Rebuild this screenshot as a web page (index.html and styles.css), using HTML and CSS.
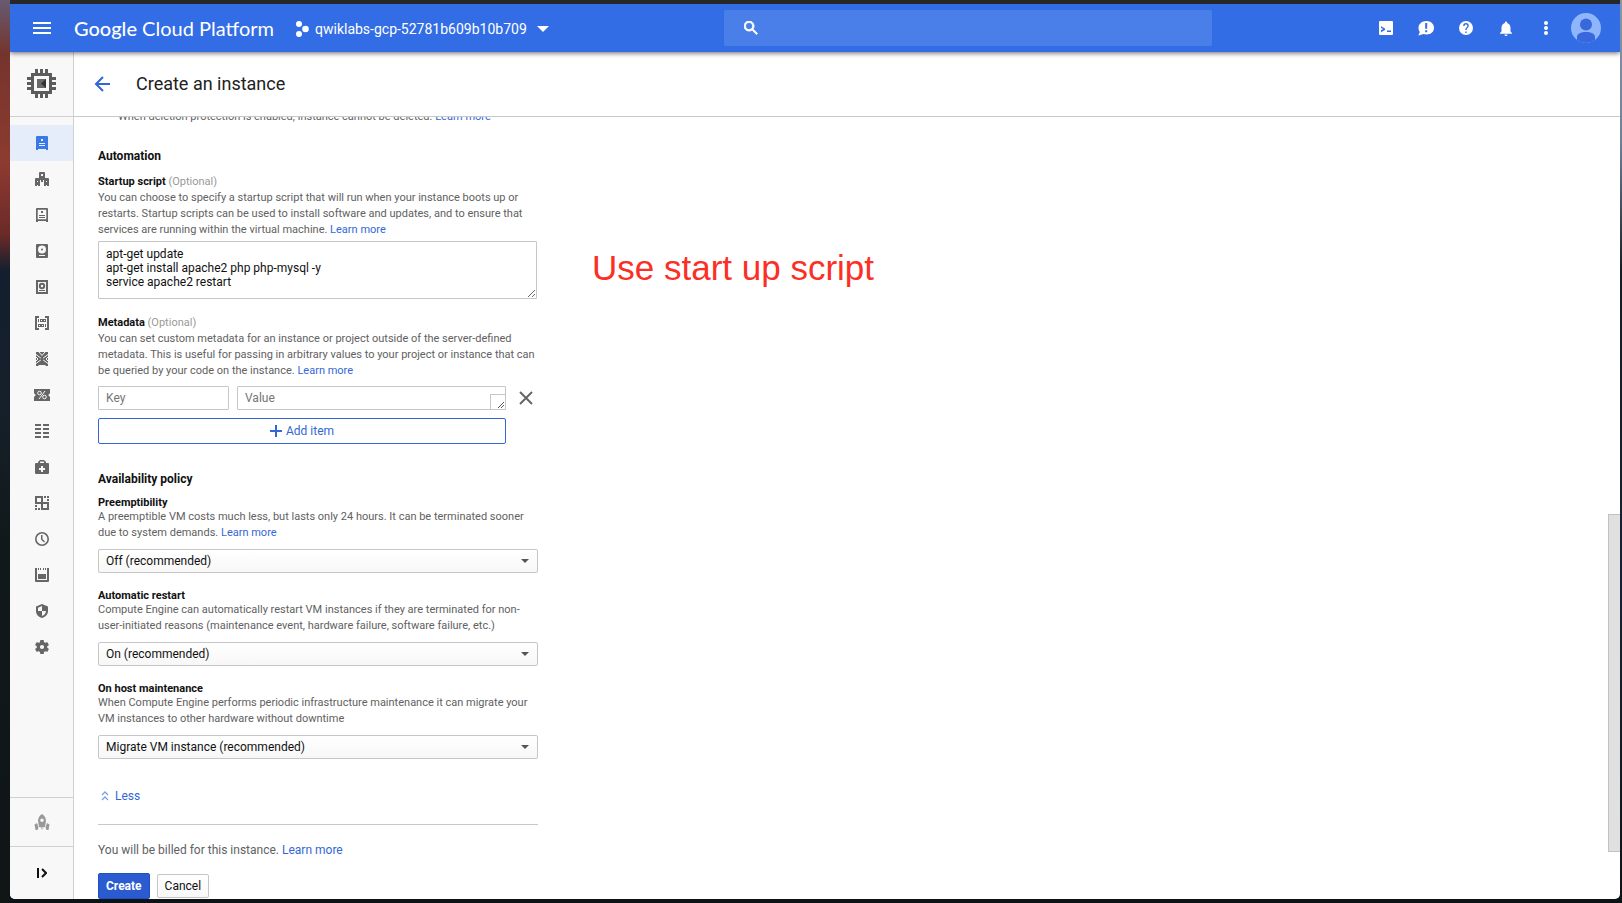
FILE: index.html
```html
<!DOCTYPE html>
<html lang="en">
<head>
<meta charset="utf-8">
<title>Create an instance - Google Cloud Platform</title>
<link rel="stylesheet" href="styles.css">
</head>
<body>
<div class="desktop">
<div class="window">
  <header class="topbar">
    <button class="icon-btn menu-btn" aria-label="Main menu"><svg width="18" height="12" viewBox="0 0 18 12"><path d="M0 0h18v2H0zM0 5h18v2H0zM0 10h18v2H0z"/></svg></button>
    <a class="brand" href="#"><b>Google</b> Cloud Platform</a>
    <button class="project">
      <svg width="14" height="16" viewBox="0 0 14 16"><circle cx="4" cy="3" r="3"/><circle cx="4" cy="13" r="3"/><circle cx="10.500" cy="8" r="3.300"/></svg>
      <span>qwiklabs-gcp-52781b609b10b709</span>
      <svg class="caret" width="12" height="6" viewBox="0 0 12 6"><path d="M0 0h12L6 6z"/></svg>
    </button>
    <label class="search" aria-label="Search">
      <svg width="14" height="14" viewBox="3 3 18 18"><path stroke="#fff" d="M15.500 14h-.79l-.28-.27A6.470 6.470 0 0 0 16 9.500 6.500 6.500 0 1 0 9.500 16c1.610 0 3.090-.59 4.230-1.570l.27.28v.79l5 4.990L20.490 19l-4.990-5zm-6 0C7.010 14 5 11.990 5 9.500S7.010 5 9.500 5 14 7.010 14 9.500 11.990 14 9.500 14z"/></svg>
      <input type="search">
    </label>
    <nav class="tools" aria-label="Tools">
      <button class="icon-btn" aria-label="Cloud Shell"><svg width="14" height="14" viewBox="0 0 14 14"><path fill-rule="evenodd" d="M1 0h12a1 1 0 0 1 1 1v12a1 1 0 0 1-1 1H1a1 1 0 0 1-1-1V1a1 1 0 0 1 1-1zM2 5.200v1.900L4.200 8 2 9.300v1.900L6 9V7.500zM8 9.500v1.500h4V9.500z"/></svg></button>
      <button class="icon-btn" aria-label="Send feedback"><svg width="16" height="16" viewBox="0 0 16 16"><path fill-rule="evenodd" d="M8.500 1C12.900 1 16 3.800 16 7.800s-3.100 6.700-7.300 6.700c-1.200 0-2.200-.2-3.200-.5L.3 15.500 1.800 12C.9 10.800.5 9.400.5 7.800.5 3.800 4 1 8.500 1zM7.200 3v5.800h2V3zm0 7.300v2h2v-2z"/></svg></button>
      <button class="icon-btn" aria-label="Help"><svg width="14" height="14" viewBox="2 2 20 20"><path d="M12 2a10 10 0 1 0 0 20 10 10 0 0 0 0-20zm1 17h-2v-2h2v2zm2.070-7.750-.9.920C13.450 12.900 13 13.500 13 15h-2v-.5c0-1.100.45-2.100 1.170-2.830l1.240-1.260c.37-.36.59-.86.59-1.410a2 2 0 1 0-4 0H8a4 4 0 1 1 8 0c0 .88-.36 1.680-.93 2.250z"/></svg></button>
      <button class="icon-btn" aria-label="Notifications"><svg width="12" height="15" viewBox="4 2 16 20"><path d="M12 22a2 2 0 0 0 2-2h-4a2 2 0 0 0 2 2zm6-6v-5c0-3.070-1.640-5.640-4.500-6.320V4a1.500 1.500 0 0 0-3 0v.68C7.630 5.360 6 7.920 6 11v5l-2 2v1h16v-1l-2-2z"/></svg></button>
      <button class="icon-btn" aria-label="More"><svg width="4" height="14" viewBox="0 0 4 14"><circle cx="2" cy="2" r="2"/><circle cx="2" cy="7" r="2"/><circle cx="2" cy="12" r="2"/></svg></button>
      <button class="icon-btn" aria-label="Account"><svg width="30" height="30" viewBox="0 0 30 30"><circle cx="15" cy="15" r="15" fill="#8fb6fb"/><circle cx="15" cy="11.500" r="6" fill="#3868dc"/><path fill="#3868dc" d="M6 27v-3c0-3.500 4-5 9-5s9 1.500 9 5v3a15 15 0 0 1-18 0z"/></svg></button>
    </nav>
  </header>
  <div class="body">
    <aside class="sidebar">
      <a class="product" href="#" aria-label="Compute Engine"><svg width="29" height="29" viewBox="0 0 29 29" fill="#5c5c5c"><path d="M8 0h3v4H8zM13 0h3v4h-3zM18 0h3v4h-3zM8 25h3v4H8zM13 25h3v4h-3zM18 25h3v4h-3zM0 8h4v3H0zM0 13h4v3H0zM0 18h4v3H0zM25 8h4v3h-4zM25 13h4v3h-4zM25 18h4v3h-4z"/><path fill-rule="evenodd" d="M4 4h21v21H4zM7 7v15h15V7z"/><path fill="#696969" d="M10 10h9v9h-9z"/><path fill="#333" d="M19 10v9l-5-4.500z"/></svg></a>
      <nav class="nav" aria-label="Compute Engine sections">
        <a class="active" href="#" aria-label="VM instances"><svg viewBox="0 0 16 16"><path fill-rule="evenodd" d="M3 1h10a1 1 0 0 1 1 1v13h-2v-1H4v1H2V2a1 1 0 0 1 1-1zM7 4v2h2V4zM5 8v1h6V8zM5 10v1h6v-1z"/></svg></a>
        <a href="#" aria-label="Instance groups"><svg viewBox="0 0 16 16"><path fill-rule="evenodd" d="M6 1h4a1 1 0 0 1 1 1v5h1V7h2a1 1 0 0 1 1 1v7h-2v-1h-1v1h-2V9H9v2H7V9H6v6H4v-1H3v1H1V8a1 1 0 0 1 1-1h3V2a1 1 0 0 1 1-1zM7 3v2h2V3zM3 10v1h1v-1zM12 10v1h1v-1z"/></svg></a>
        <a href="#" aria-label="Instance templates"><svg viewBox="0 0 16 16"><path fill-rule="evenodd" d="M3 1h10a1 1 0 0 1 1 1v13h-2v-1H4v1H2V2a1 1 0 0 1 1-1zm.7 1.700v9.600h8.600V2.700zM7 4h2v2H7zM5 8h6v1H5zM5 10h6v1H5z"/></svg></a>
        <a href="#" aria-label="Disks"><svg viewBox="0 0 16 16"><path fill-rule="evenodd" d="M3 1h10a1 1 0 0 1 1 1v12a1 1 0 0 1-1 1H3a1 1 0 0 1-1-1V2a1 1 0 0 1 1-1zm5 1.500a4 4 0 1 0 0 8 4 4 0 0 0 0-8zm0 3a1 1 0 1 1 0 2 1 1 0 0 1 0-2zM5 12v1h6v-1z"/></svg></a>
        <a href="#" aria-label="Snapshots"><svg viewBox="0 0 16 16"><path fill-rule="evenodd" d="M2 1h12v14H2zM4 3v10h8V3zm4 .8a3.200 3.200 0 1 1 0 6.400 3.200 3.200 0 0 1 0-6.400zm0 2a1.200 1.200 0 1 0 0 2.400 1.200 1.200 0 0 0 0-2.400zM5 11h6v1H5z"/></svg></a>
        <a href="#" aria-label="Images"><svg viewBox="0 0 16 16"><path fill-rule="evenodd" d="M1 1h4v2H3v10h2v2H1zM11 1h4v14h-4v-2h2V3h-2zM4 4h1v3H4zM6 4h3v3H6zm1 1v1h1V5zM9 4h3v3H9zm1 1v1h1V5zM4 9h3v3H4zm1 1v1h1v-1zM7 9h3v3H7zm1 1v1h1v-1zM11 9h1v3h-1z"/></svg></a>
        <a href="#" aria-label="TPUs"><svg viewBox="0 0 16 16"><path d="M2 1h12v14h-2l-1-1H5l-1 1H2z"/><path stroke="#f8f8f8" fill="none" d="M2 3.500l12 9M14 3.500l-12 9M5 1l3 3.500L11 1M2 6l2 2-2 2M14 6l-2 2 2 2"/><path d="M8 6.500l2 1.500-2 2-2-2z"/></svg></a>
        <a href="#" aria-label="Committed use discounts"><svg viewBox="0 0 16 16"><path d="M0 2h16v4.500a1.500 1.500 0 0 0 0 3V14H0V9.500a1.500 1.500 0 0 0 0-3z"/><g fill="none" stroke="#f8f8f8"><circle cx="5.500" cy="6" r="1.800"/><circle cx="10.500" cy="10" r="1.800"/><path d="M11 4l-6 8"/></g></svg></a>
        <a href="#" aria-label="Metadata"><svg viewBox="0 0 16 16"><path d="M1 1h6v2H1zM9 1h6v2H9zM1 5h6v2H1zM9 5h6v2H9zM1 9h6v2H1zM9 9h6v2H9zM1 13h6v2H1zM9 13h6v2H9z"/></svg></a>
        <a href="#" aria-label="Health checks"><svg viewBox="0 0 16 16"><path fill-rule="evenodd" d="M6 1h4l2 2v1h2a1 1 0 0 1 1 1v9a1 1 0 0 1-1 1H2a1 1 0 0 1-1-1V5a1 1 0 0 1 1-1h2V3zm0 3h4V3L9.500 2.500h-3L6 3zm1 3v2H5v2h2v2h2v-2h2V9H9V7z"/></svg></a>
        <a href="#" aria-label="Zones"><svg viewBox="0 0 16 16"><path fill-rule="evenodd" d="M1 1h8v6h6v8H7V9H1zM3 3v4h4V3zM9 9v4h4V9zM10 1h2v2h-2zM13 1h2v2h-2zM13 4h2v2h-2zM1 10h2v2H1zM1 13h2v2H1zM4 13h2v2H4z"/></svg></a>
        <a href="#" aria-label="Operations"><svg viewBox="0 0 16 16"><circle cx="8" cy="8" r="6.200" fill="none" stroke="currentColor" stroke-width="1.600"/><path d="M7 4h1.500v4l2.500 2.500-1 1L7 8.500z"/></svg></a>
        <a href="#" aria-label="Quotas"><svg viewBox="0 0 16 16"><path d="M1 1h2v12h10V1h2v13a1 1 0 0 1-1 1H2a1 1 0 0 1-1-1zM4 1h1v2H4zM6 1h1v2H6zM9 1h1v2H9zM11 1h1v2h-1zM4 7h8v5H4z"/></svg></a>
        <a href="#" aria-label="Security scans"><svg viewBox="0 0 16 16"><path fill-rule="evenodd" d="M8 1l6 2.500V8c0 3.500-2.500 6-6 7-3.500-1-6-3.500-6-7V3.500zM8 3 4 4.700V8h4zm0 5v5c2.200-.8 3.800-2.500 4-5z"/></svg></a>
        <a href="#" aria-label="Settings"><svg viewBox="2 2 20 20"><path d="M19.430 12.980c.04-.32.07-.64.07-.98s-.03-.66-.07-.98l2.110-1.650a.5.5 0 0 0 .12-.64l-2-3.460a.5.5 0 0 0-.61-.22l-2.490 1a7.300 7.300 0 0 0-1.690-.98l-.38-2.650A.49.49 0 0 0 14 2h-4a.49.49 0 0 0-.49.42l-.38 2.650c-.61.25-1.170.59-1.690.98l-2.490-1a.49.49 0 0 0-.61.22l-2 3.460a.49.49 0 0 0 .12.64l2.110 1.650a7.900 7.900 0 0 0 0 1.960l-2.110 1.650a.5.5 0 0 0-.12.64l2 3.460c.12.22.39.3.61.22l2.490-1c.52.4 1.080.73 1.690.98l.38 2.650c.03.24.24.42.49.42h4c.25 0 .46-.18.49-.42l.38-2.650a7.700 7.700 0 0 0 1.690-.98l2.490 1c.23.09.49 0 .61-.22l2-3.460a.5.5 0 0 0-.12-.64zM12 15a3 3 0 1 1 0-6 3 3 0 0 1 0 6z"/></svg></a>
      </nav>
      <a class="launcher" href="#" aria-label="Marketplace"><svg width="16" height="17" viewBox="0 0 16 17"><path fill="#999" fill-rule="evenodd" d="M8 0c3 2 4 4.500 4 7l-1 6H5L4 7c0-2.500 1-5 4-7zm0 4.500a1.800 1.800 0 1 0 0 3.600 1.800 1.800 0 0 0 0-3.600zM3 9l1.500 4.500L3.500 16H1.500L.5 10.500zM13 9l2.500 1.500-1 5.500h-2l-1-2.500z"/><path fill="#c8c8c8" d="M6 13h4l-2 3z"/></svg></a>
      <button class="expander" aria-label="Expand menu"><svg width="10" height="10" viewBox="0 0 10 10"><path fill="none" stroke="#111" stroke-width="2" d="M1 0v10M5 1l4 4-4 4"/></svg></button>
    </aside>
    <main class="main">
      <div class="page-head">
        <a class="back" href="#" aria-label="Back"><svg width="16" height="16" viewBox="0 0 16 16"><path fill="none" stroke="#3367d6" stroke-width="2" d="M16 8H2M9 1 2 8l7 7"/></svg></a>
        <h1>Create an instance</h1>
      </div>
      <div class="scroller">
        <form class="form">
          <p class="hint clipped">When deletion protection is enabled, instance cannot be deleted. <a href="#">Learn more</a></p>
          <section class="automation">
            <h2>Automation</h2>
            <label class="tall" for="script">Startup script <span>(Optional)</span></label>
            <p class="hint">You can choose to specify a startup script that will run when your instance boots up or<br>restarts. Startup scripts can be used to install software and updates, and to ensure that<br>services are running within the virtual machine. <a href="#">Learn more</a></p>
            <textarea id="script" class="script" spellcheck="false">apt-get update
apt-get install apache2 php php-mysql -y
service apache2 restart</textarea>
          </section>
          <section class="metadata">
            <label class="tall" for="key">Metadata <span>(Optional)</span></label>
            <p class="hint">You can set custom metadata for an instance or project outside of the server-defined<br>metadata. This is useful for passing in arbitrary values to your project or instance that can<br>be queried by your code on the instance. <a href="#">Learn more</a></p>
            <div class="pair">
              <input id="key" type="text" placeholder="Key">
              <textarea class="value" aria-label="Value" placeholder="Value"></textarea>
              <button type="button" class="remove" aria-label="Remove item"><svg width="14" height="14" viewBox="0 0 14 14"><path stroke="#666" stroke-width="2" d="M1 1l12 12M13 1 1 13"/></svg></button>
              <button type="button" class="add"><svg width="12" height="12" viewBox="0 0 12 12"><path d="M5 0h2v5h5v2H7v5H5V7H0V5h5z"/></svg>Add item</button>
            </div>
          </section>
          <section class="policy">
            <h2>Availability policy</h2>
            <div class="field">
              <label for="preempt">Preemptibility</label>
              <p class="hint">A preemptible VM costs much less, but lasts only 24 hours. It can be terminated sooner<br>due to system demands. <a href="#">Learn more</a></p>
              <select id="preempt"><option>Off (recommended)</option></select>
            </div>
            <div class="field">
              <label for="restart">Automatic restart</label>
              <p class="hint">Compute Engine can automatically restart VM instances if they are terminated for non-<br>user-initiated reasons (maintenance event, hardware failure, software failure, etc.)</p>
              <select id="restart"><option>On (recommended)</option></select>
            </div>
            <div class="field">
              <label for="maint">On host maintenance</label>
              <p class="hint">When Compute Engine performs periodic infrastructure maintenance it can migrate your<br>VM instances to other hardware without downtime</p>
              <select id="maint"><option>Migrate VM instance (recommended)</option></select>
            </div>
          </section>
          <a class="less" href="#"><svg width="8" height="10" viewBox="0 0 8 10"><path fill="none" stroke="#7d9fe6" stroke-width="1.300" d="M1 4l3-3 3 3M1 9l3-3 3 3"/></svg>Less</a>
          <p class="billing">You will be billed for this instance. <a href="#">Learn more</a></p>
          <div class="actions">
            <button type="submit" class="create">Create</button>
            <button type="button" class="cancel">Cancel</button>
          </div>
        </form>
        <p class="note">Use start up script</p>
        <div class="track"><div class="thumb"></div></div>
      </div>
    </main>
  </div>
</div>
</div>
</body>
</html>
```

FILE: styles.css
```css
* { box-sizing: border-box; }

body {
  margin: 0;
  font-family: Roboto, "Liberation Sans", sans-serif;
  font-size: 12px;
  color: #212121;
}

button, input, textarea, select { font: inherit; color: inherit; }
button { border: 0; padding: 0; background: none; cursor: pointer; }
a { color: #3367d6; text-decoration: none; }
h1, h2, p { margin: 0; font-weight: 400; }
svg { display: block; flex: none; }

.desktop {
  height: 100vh;
  padding: 0 2px 4px 10px;
  background:
    linear-gradient(#8796a8, #6d7f98 16%, #141e26 30%, #142334 65%, #0c1416) right / 2px 100% no-repeat,
    linear-gradient(#665b72, #74342c 6%, #8d3b30 18%, #6a2a28 26%, #131f2e 30%, #16202a 45%, #10191a 60%, #101516 100%) left / 10px 100% no-repeat,
    #0b1316;
}

.window {
  height: 100%;
  display: flex;
  flex-direction: column;
  overflow: hidden;
  border-top: 4px solid #272727;
  border-radius: 0 0 5px 5px;
  background: #fff;
}

/* Top bar */
.topbar {
  flex: none;
  z-index: 1;
  height: 48px;
  display: flex;
  align-items: center;
  padding-right: 14px;
  background: #326de6;
  box-shadow: 0 1px 5px rgba(0, 0, 0, .6);
  color: #fff;
  fill: #fff;
}

.icon-btn { width: 40px; height: 40px; display: flex; align-items: center; justify-content: center; }
.menu-btn { width: 64px; }
.brand { color: #fff; font-family: Lato, Roboto, sans-serif; font-size: 20px; width: 221px; white-space: nowrap; }
.brand b { font-weight: 500; }
.project { display: flex; align-items: center; gap: 6px; padding-top: 2px; font-size: 14px; flex: none; }
.project .caret { margin-left: 4px; }

.search {
  margin-left: auto;
  width: 488px;
  height: 36px;
  display: flex;
  align-items: center;
  padding-left: 20px;
  border-radius: 2px;
  background: #4a7fe9;
}
.search input { flex: 1; min-width: 0; border: 0; outline: 0; background: none; }
.tools { display: flex; margin-left: 154px; }

/* Sidebar */
.body { flex: 1; min-height: 0; display: flex; }

.sidebar {
  width: 64px;
  flex: none;
  display: flex;
  flex-direction: column;
  border-right: 1px solid #d0d0d0;
  background: #f8f8f8;
}
.product { height: 65px; flex: none; display: flex; align-items: center; justify-content: center; padding-bottom: 2px; border-bottom: 1px solid #d0d0d0; }
.nav { flex: 1; padding-top: 8px; }
.nav a { height: 36px; display: flex; align-items: center; justify-content: center; padding-left: 1px; color: #666; fill: currentColor; }
.nav svg { width: 16px; height: 16px; }
.nav a:last-child svg { width: 14px; height: 14px; }
.nav .active { background: #e6edfa; color: #3b78e7; }
.launcher, .expander { height: 49px; flex: none; display: flex; align-items: center; justify-content: center; padding-left: 1px; border-top: 1px solid #d0d0d0; }
.expander { height: 53px; }

/* Page */
.main { flex: 1; min-width: 0; display: flex; flex-direction: column; }
.page-head { height: 65px; flex: none; display: flex; align-items: center; gap: 26px; padding-left: 20px; border-bottom: 1px solid #c8c8c8; }
h1 { font-size: 18px; padding-bottom: 1px; }

.scroller { position: relative; flex: 1; min-height: 0; display: flex; overflow: hidden; }
.form { width: 440px; margin: -8px auto 0 24px; white-space: nowrap; }

h2 { font-size: 12px; line-height: 16px; font-weight: 700; color: #111; }
label { display: block; font-size: 11px; line-height: 14px; font-weight: 700; color: #111; }
label.tall { line-height: 16px; }
label span { font-weight: 400; color: #999; }
.hint { font-size: 11px; line-height: 16px; color: #616161; }
.clipped { padding-left: 20px; }

.automation { margin-top: 23px; }
.automation h2 { margin-bottom: 10px; }
.metadata { margin-top: 16px; }

.form textarea, .form input {
  display: block;
  width: 100%;
  border: 1px solid #c6c6c6;
  border-radius: 1px;
  background: #fff;
  outline: 0;
}
.form .script { width: 439px; height: 58px; margin-top: 3px; padding: 5px 7px; line-height: 14px; resize: both; color: #111; }

.pair { display: grid; grid-template-columns: 131px 269px 24px; gap: 8px; margin-top: 7px; }
.pair input, .pair textarea { height: 24px; padding: 0 7px; line-height: 22px; }
.pair ::placeholder { color: #757575; }
.value::-webkit-resizer {
  border: solid #c6c6c6;
  border-width: 1px 0 0 1px;
  background: url("data:image/svg+xml,%3Csvg xmlns='http://www.w3.org/2000/svg' width='6' height='6'%3E%3Cpath d='M0 6L6 0M3 6L6 3' stroke='%23555'/%3E%3C/svg%3E") right 1px bottom 1px no-repeat;
}
.remove { display: flex; align-items: center; justify-content: center; }
.add {
  grid-column: 1 / 3;
  height: 26px;
  display: flex;
  align-items: center;
  justify-content: center;
  gap: 4px;
  border: 1px solid #3367d6;
  border-radius: 2px;
  background: #fff;
  color: #3367d6;
  fill: #3367d6;
}

.policy { margin-top: 27px; }
.policy h2 { margin-bottom: 8px; }
.field { margin-bottom: 15px; }
.field label { padding-top: 1px; line-height: 13px; }
.field select {
  display: block;
  width: 100%;
  height: 24px;
  margin-top: 8px;
  padding: 0 7px;
  appearance: none;
  border: 1px solid #c6c6c6;
  border-radius: 2px;
  outline: 0;
  color: #111;
  background:
    url("data:image/svg+xml,%3Csvg xmlns='http://www.w3.org/2000/svg' width='8' height='4'%3E%3Cpath d='M0 0h8L4 4z' fill='%23555'/%3E%3C/svg%3E") right 8px center no-repeat,
    linear-gradient(#fff, #f7f7f7);
}

.less { display: flex; align-items: center; gap: 6px; padding: 14px 3px 20px; line-height: 16px; }
.billing { padding: 17px 0 15px; border-top: 1px solid #c8c8c8; line-height: 16px; color: #616161; }
.actions { display: flex; align-items: center; gap: 7px; }
.create, .cancel { height: 26px; padding: 0 7px; border: 1px solid #1f4fc4; border-radius: 2px; }
.create { background: #2a5bd0; color: #fff; font-weight: 700; }
.cancel { height: 24px; border-color: #c6c6c6; background: linear-gradient(#fff, #f8f8f8); color: #111; }

/* Annotation laid over the page */
.note {
  position: absolute;
  left: 518px;
  top: 131px;
  font: 35px/40px "Liberation Sans", Arial, sans-serif;
  color: #fb2f25;
}

.track { width: 12px; display: grid; grid-template-rows: 397fr 338fr 47fr; }
.thumb { grid-row: 2; border: 1px solid #c1c1c1; border-right: 0; background: #e0e0e0; }
```
